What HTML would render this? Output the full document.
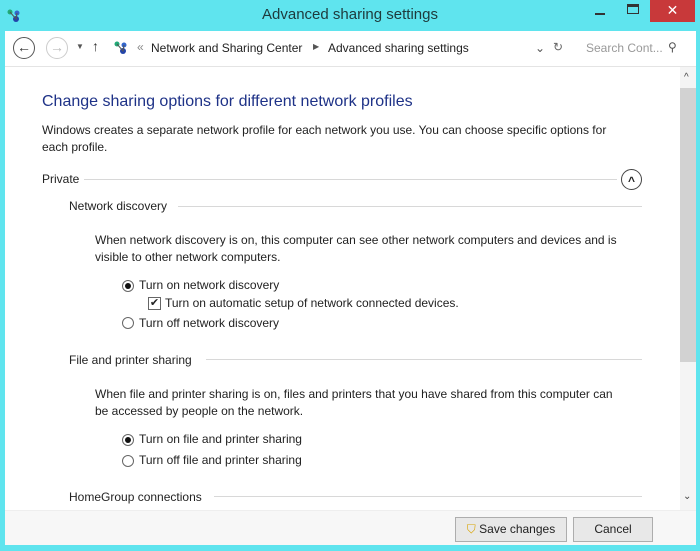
<!DOCTYPE html>
<html><head><style>
*{margin:0;padding:0;box-sizing:border-box}
body{width:700px;height:551px;background:#5fe4ee;font-family:"Liberation Sans",sans-serif;color:#222;position:relative;overflow:hidden}
.a{position:absolute;white-space:nowrap}
.t{font-size:12px}
.hr{position:absolute;height:1px;background:#d8d8d8}
.rad{position:absolute;width:12px;height:12px;border:1px solid #666;border-radius:50%;background:#fff}
.rad.on::after{content:"";position:absolute;left:2px;top:2px;width:6px;height:6px;border-radius:50%;background:#111}
.btn{position:absolute;height:25px;border:1px solid #adadad;background:#e8e8e8;font-size:12px;text-align:center;line-height:23px}
</style></head><body>
<div class="a" style="left:0;width:700px;text-align:center;font-size:15px;color:#1e3a3c;top:6px">Advanced sharing settings</div>
<svg class="a" style="left:6px;top:8px" width="16" height="14"><circle cx="4" cy="4" r="2.5" fill="#2a7"/><circle cx="11" cy="5" r="2.5" fill="#36c"/><circle cx="10" cy="11" r="3" fill="#24a"/><path d="M4 4L10 11L11 5" stroke="#555" fill="none"/></svg>
<div class="a" style="left:595px;top:13px;width:10px;height:2px;background:#333"></div>
<div class="a" style="left:627px;top:4px;width:12px;height:10px;border:1px solid #333;border-top-width:3px"></div>
<div class="a" style="left:650px;top:0;width:45px;height:22px;background:#c8393a;color:#fff;text-align:center;font-size:14px;line-height:20px">✕</div>
<div class="a" style="left:5px;top:31px;width:691px;height:514px;background:#fff"></div>
<div class="a" style="left:5px;top:66px;width:691px;height:1px;background:#e4e4e4"></div>
<div class="a" style="left:13px;top:37px;width:22px;height:22px;border:1px solid #555;border-radius:50%;text-align:center;font-size:14px;line-height:19px;color:#333">←</div>
<div class="a" style="left:46px;top:37px;width:22px;height:22px;border:1px solid #ccc;border-radius:50%;text-align:center;font-size:14px;line-height:19px;color:#bbb">→</div>
<div class="a" style="left:76px;top:42px;font-size:8px;color:#555">▼</div>
<div class="a" style="left:92px;top:38px;font-size:14px;color:#333">↑</div>
<svg class="a" style="left:113px;top:40px" width="16" height="14"><circle cx="4" cy="4" r="2.5" fill="#2a7"/><circle cx="11" cy="5" r="2.5" fill="#36c"/><circle cx="10" cy="11" r="3" fill="#24a"/><path d="M4 4L10 11L11 5" stroke="#555" fill="none"/></svg>
<div class="a t" style="left:137px;top:40px;color:#888">«</div>
<div class="a t" style="left:151px;top:41px">Network and Sharing Center</div>
<div class="a" style="left:313px;top:42px;font-size:8px;color:#555">▶</div>
<div class="a t" style="left:328px;top:41px">Advanced sharing settings</div>
<div class="a t" style="left:535px;top:41px;color:#555">⌄</div>
<div class="a t" style="left:553px;top:40px;color:#666">↻</div>
<div class="a t" style="left:586px;top:41px;color:#999">Search Cont...</div>
<div class="a t" style="left:668px;top:40px;color:#555">⚲</div>
<div class="a" style="left:680px;top:67px;width:16px;height:443px;background:#f4f4f4"></div>
<div class="a" style="left:680px;top:88px;width:16px;height:274px;background:#d2d2d2"></div>
<div class="a" style="left:684px;top:72px;font-size:10px;color:#444">^</div>
<div class="a" style="left:683px;top:491px;font-size:10px;color:#444">⌄</div>
<div class="a" style="left:42px;top:93px;font-size:16px;color:#1e3287">Change sharing options for different network profiles</div>
<div class="a t" style="left:42px;top:123px">Windows creates a separate network profile for each network you use. You can choose specific options for</div>
<div class="a t" style="left:42px;top:140px">each profile.</div>
<div class="a t" style="left:42px;top:172px">Private</div>
<div class="hr" style="left:84px;top:179px;width:533px"></div>
<div class="a" style="left:621px;top:169px;width:21px;height:21px;border:1px solid #444;border-radius:50%;text-align:center;font-size:12px;font-weight:bold;line-height:22px">^</div>
<div class="a t" style="left:69px;top:199px">Network discovery</div>
<div class="hr" style="left:178px;top:206px;width:464px"></div>
<div class="a t" style="left:95px;top:233px">When network discovery is on, this computer can see other network computers and devices and is</div>
<div class="a t" style="left:95px;top:250px">visible to other network computers.</div>
<div class="rad on" style="left:122px;top:280px"></div>
<div class="a t" style="left:139px;top:278px">Turn on network discovery</div>
<div class="a" style="left:148px;top:297px;width:13px;height:13px;border:1px solid #666;font-size:11px;line-height:11px;text-align:center">✔</div>
<div class="a t" style="left:165px;top:296px">Turn on automatic setup of network connected devices.</div>
<div class="rad" style="left:122px;top:317px"></div>
<div class="a t" style="left:139px;top:316px">Turn off network discovery</div>
<div class="a t" style="left:69px;top:353px">File and printer sharing</div>
<div class="hr" style="left:206px;top:359px;width:436px"></div>
<div class="a t" style="left:95px;top:387px">When file and printer sharing is on, files and printers that you have shared from this computer can</div>
<div class="a t" style="left:95px;top:404px">be accessed by people on the network.</div>
<div class="rad on" style="left:122px;top:434px"></div>
<div class="a t" style="left:139px;top:432px">Turn on file and printer sharing</div>
<div class="rad" style="left:122px;top:455px"></div>
<div class="a t" style="left:139px;top:453px">Turn off file and printer sharing</div>
<div class="a t" style="left:69px;top:490px">HomeGroup connections</div>
<div class="hr" style="left:214px;top:496px;width:428px"></div>
<div class="a" style="left:5px;top:510px;width:691px;height:35px;background:#f7f7f7;border-top:1px solid #eee"></div>
<div class="btn" style="left:455px;top:517px;width:112px"><span style="color:#d9a400">⛉</span> Save changes</div>
<div class="btn" style="left:573px;top:517px;width:80px">Cancel</div>
</body></html>
